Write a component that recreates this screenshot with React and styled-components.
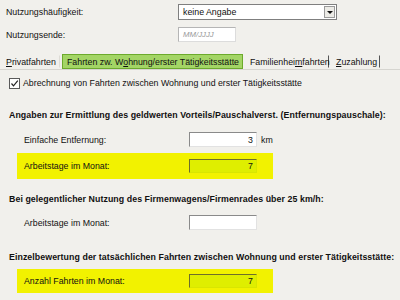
import React from "react";
import styled, { createGlobalStyle } from "styled-components";

const Global = createGlobalStyle`
  html, body { margin: 0; padding: 0; }
  body {
    width: 400px; height: 300px; overflow: hidden;
    background: #f1f0ec;
    font-family: "Liberation Sans", Arial, sans-serif;
    font-size: 8.8px;
    color: #111;
  }
`;

const Page = styled.div`
  display: flex;
  flex-direction: column;
  padding-top: 4px;
`;

const FieldRow = styled.div`
  display: flex;
  align-items: center;
  height: ${p => p.$h || 16}px;
  margin-top: ${p => p.$mt || 0}px;
  padding-left: ${p => p.$pl || 6}px;
`;

const Label = styled.div`
  width: ${p => p.$w}px;
  flex: none;
`;

const Select = styled.div`
  width: 159px;
  height: 16px;
  box-sizing: border-box;
  border: 1px solid #7f7f7f;
  background: #fff;
  display: flex;
  align-items: center;
  padding-left: 4px;
`;

const SelectText = styled.span`
  flex: 1;
`;

const Arrow = styled.div`
  width: 11px;
  height: 12px;
  margin-right: 1px;
  box-sizing: border-box;
  border: 1px solid #9a9a9a;
  background: #ecebe6;
  display: flex;
  align-items: center;
  justify-content: center;
  &::after {
    content: "";
    border-left: 3px solid transparent;
    border-right: 3px solid transparent;
    border-top: 3px solid #111;
  }
`;

const DateInput = styled.div`
  width: 58px;
  height: 15px;
  box-sizing: border-box;
  border: 1px solid;
  border-color: #b5b5b5 #dcdcdc #dcdcdc #b5b5b5;
  background: #fff;
  color: #9a9a9a;
  font-style: italic;
  padding-left: 4px;
  display: flex;
  align-items: center;
  font-size: 7.8px;
`;

const TabBar = styled.div`
  display: flex;
  align-items: flex-end;
  height: 16px;
  margin-top: 11px;
  border-bottom: 1px solid #d6d5d0;
  padding-left: 2px;
`;

const Tab = styled.div`
  height: ${p => (p.$active ? 15 : 13)}px;
  box-sizing: border-box;
  display: flex;
  align-items: center;
  white-space: nowrap;
  padding: 0 ${p => p.$px || 3}px;
  margin-right: ${p => p.$mr || 0}px;
  background: ${p => (p.$active ? "#a3d565" : "transparent")};
  border: 1px solid ${p => (p.$active ? "#6caa2c" : "transparent")};
  border-right: 1px solid ${p => (p.$active ? "#6caa2c" : p.$sep ? "#555" : "#dedcd6")};
  margin-bottom: ${p => (p.$active ? 0 : 1)}px;
  width: ${p => p.$w}px;
  & u { text-decoration: underline; }
`;

const CheckRow = styled.div`
  display: flex;
  align-items: center;
  gap: 3px;
  padding-left: 9px;
  margin-top: 7px;
  height: 12px;
`;

const Box = styled.div`
  width: 11px;
  height: 11px;
  box-sizing: border-box;
  border: 1px solid #5a5a5a;
  background: #fff;
  display: flex;
  align-items: center;
  justify-content: center;
`;

const Heading = styled.div`
  font-weight: bold;
  letter-spacing: 0.07px;
  padding-left: 9px;
  height: 12px;
  display: flex;
  align-items: center;
  margin-top: ${p => p.$mt}px;
  white-space: nowrap;
`;

const Highlight = styled.div`
  display: flex;
  align-items: center;
  width: 256px;
  height: ${p => p.$h || 26}px;
  box-sizing: border-box;
  margin-left: 17px;
  margin-top: ${p => p.$mt}px;
  padding-left: 7px;
  background: #f2f200;
`;

const Input = styled.div`
  width: 68px;
  height: ${p => p.$h || 15}px;
  box-sizing: border-box;
  border: 1px solid;
  border-color: ${p => (p.$yellow ? "#6e6e2a #d9e600 #d9e600 #6e6e2a" : "#8a8a8a #e2e2e2 #e2e2e2 #8a8a8a")};
  background: ${p => (p.$yellow ? "#dfee00" : "#fff")};
  display: flex;
  align-items: center;
  justify-content: flex-end;
  padding-right: 3px;
`;

const Unit = styled.span`
  margin-left: 4px;
`;

export default function App() {
  return (
    <>
      <Global />
      <Page>
        <FieldRow>
          <Label $w={172}>Nutzungshäufigkeit:</Label>
          <Select>
            <SelectText>keine Angabe</SelectText>
            <Arrow />
          </Select>
        </FieldRow>
        <FieldRow $mt={7} $h={15}>
          <Label $w={172}>Nutzungsende:</Label>
          <DateInput>MM/JJJJ</DateInput>
        </FieldRow>

        <TabBar>
          <Tab $w={58} $mr={2}><u>P</u>rivatfahrten</Tab>
          <Tab $active $w={181} $px={4} $mr={3}>Fahrten zw. W<u>o</u>hnung/erster Tätigkeitsstätte</Tab>
          <Tab $sep $w={83}>Familienhei<u>m</u>fahrten</Tab>
          <Tab $sep $w={51} $px={6}><u>Z</u>uzahlung</Tab>
        </TabBar>

        <CheckRow>
          <Box>
            <svg width="9" height="9" viewBox="0 0 9 9">
              <path d="M1.5 4.5 L3.5 6.8 L7.8 1.6" fill="none" stroke="#222" strokeWidth="1.2" />
            </svg>
          </Box>
          <span>Abrechnung von Fahrten zwischen Wohnung und erster Tätigkeitsstätte</span>
        </CheckRow>

        <Heading $mt={20}>Angaben zur Ermittlung des geldwerten Vorteils/Pauschalverst. (Entfernungspauschale):</Heading>
        <FieldRow $mt={11} $h={15} $pl={24}>
          <Label $w={165}>Einfache Entfernung:</Label>
          <Input>3</Input>
          <Unit>km</Unit>
        </FieldRow>
        <Highlight $mt={6}>
          <Label $w={165}>Arbeitstage im Monat:</Label>
          <Input $yellow $h={14}>7</Input>
        </Highlight>

        <Heading $mt={14}>Bei gelegentlicher Nutzung des Firmenwagens/Firmenrades über 25 km/h:</Heading>
        <FieldRow $mt={10} $h={15} $pl={24}>
          <Label $w={165}>Arbeitstage im Monat:</Label>
          <Input />
        </FieldRow>

        <Heading $mt={21}>Einzelbewertung der tatsächlichen Fahrten zwischen Wohnung und erster Tätigkeitsstätte:</Heading>
        <Highlight $mt={6} $h={24}>
          <Label $w={165}>Anzahl Fahrten im Monat:</Label>
          <Input $yellow $h={14}>7</Input>
        </Highlight>
      </Page>
    </>
  );
}
